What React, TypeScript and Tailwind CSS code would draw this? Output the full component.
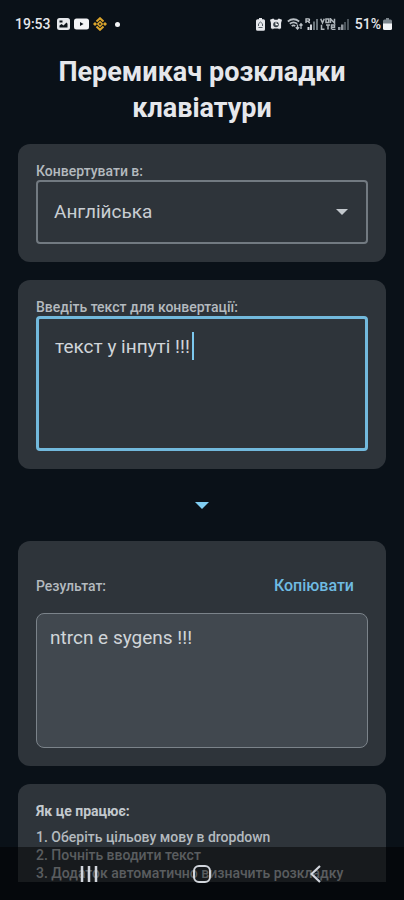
import { useMemo, useState } from "react";

const FONT = "font-['Roboto','Noto_Sans',sans-serif]";

const LANGUAGES = [
  { value: "en", label: "Англійська" },
  { value: "uk", label: "Українська" },
];

const UK_KEYS = "йцукенгшщзхїфівапролджєячсмитьбю";
const EN_KEYS = "qwertyuiop[]asdfghjkl;'zxcvbnm,.";

const STEPS = [
  "1. Оберіть цільову мову в dropdown",
  "2. Почніть вводити текст",
  "3. Додаток автоматично визначить розкладку",
];

function convertLayout(text: string, target: string): string {
  const from = target === "en" ? UK_KEYS : EN_KEYS;
  const to = target === "en" ? EN_KEYS : UK_KEYS;
  return Array.from(text)
    .map((char) => {
      const index = from.indexOf(char);
      return index === -1 ? char : to[index];
    })
    .join("");
}

function StatusBar() {
  return (
    <header className="flex h-12 shrink-0 items-center justify-between pr-3 pl-[15px] text-sm font-medium text-gray-200">
      <div className="flex items-center gap-1">
        <span className="mr-0.5">19:53</span>
        <svg className="h-3 w-[13px]" viewBox="0 0 13 12" aria-hidden>
          <rect width="13" height="12" rx="2.5" fill="#e5e7eb" />
          <path d="M2.5 9.5V7.5L4.5 6l2 1.5 3-3 1 1.2v3.8z" fill="#0b131a" />
          <path d="M2.5 2.5h3v2h-3z" fill="#0b131a" />
        </svg>
        <svg className="h-3 w-[15px]" viewBox="0 0 15 12" aria-hidden>
          <rect y="0.5" width="15" height="11" rx="2.5" fill="#f3f4f6" />
          <path d="M6 4 9.5 6 6 8z" fill="#0b131a" />
        </svg>
        <svg className="size-[14px]" viewBox="0 0 14 14" aria-hidden>
          <g fill="none" stroke="#dba52c" strokeWidth="2">
            <path d="M3.5 4.500 7 1.200l3.500 3.300M3.500 9.500 7 12.800l3.500-3.300" />
            <path d="M7 4.800 9.200 7 7 9.200 4.800 7z" strokeWidth="1.600" />
          </g>
          <path d="M0 7l2-2 2 2-2 2zM10 7l2-2 2 2-2 2z" fill="#dba52c" />
        </svg>
        <span className="ml-1 size-[5px] rounded-full bg-gray-100" />
      </div>

      <div className="flex items-center gap-0.5">
        <svg className="h-[13px] w-[9px]" viewBox="0 0 9 13" aria-hidden>
          <path
            d="M3 0h3v1.3h1.5Q9 1.3 9 2.8v8.4q0 1.5-1.5 1.5h-6Q0 12.7 0 11.2V2.8Q0 1.3 1.5 1.3H3z"
            fill="#e5e7eb"
          />
          <path d="M2.5 8V5.8L4.500 4l2 1.800V8M2.500 9.500h4" fill="none" stroke="#59636b" />
        </svg>
        <svg className="mx-[3px] h-3 w-3" viewBox="0 0 13 12" aria-hidden>
          <path
            d="M0 1.5 3.5 0 5 1.5h3L9.5 0 13 1.5 12 5v6h-1.500l-.5 1-1-1H4l-1 1-.5-1H1V5z"
            fill="#e5e7eb"
          />
          <circle cx="6.5" cy="6.5" r="3" fill="#39424a" />
          <path d="M6.5 4.2v2.500h2" fill="none" stroke="#fff" strokeWidth="1.2" />
        </svg>
        <svg className="h-3 w-4" viewBox="0 0 16 12" aria-hidden>
          <g fill="none" stroke="#b9bfc4" strokeWidth="1.7">
            <path d="M.8 3.500Q6.500-1 12.200 3.500" />
            <path d="M2.800 5.800Q6.500 3 10.200 5.800" />
            <path d="M4.700 8Q6.500 6.800 8.300 8" />
            <path
              d="M10.500 11V6.500M8.800 9.300l1.700 1.800 1.700-1.800M14 11V6M12.500 7.500 14 5.800l1.500 1.700"
              strokeWidth="1.3"
            />
          </g>
        </svg>
        <svg className="h-3 w-[13px]" viewBox="0 0 13 12" aria-hidden>
          <path
            d="M1 5V.8h2.200q1.300 0 1.300 1.200T3.200 3.200H1M3 3.200 4.800 5"
            fill="none"
            stroke="#c8cdd1"
            strokeWidth="1.3"
          />
          <path d="M2.500 12V9h2v3M5 12V6.500h2V12" fill="#d1d5db" />
          <path d="M8 12V3.500h2V12M11 12V1h2v11" fill="#69737a" />
        </svg>
        <svg className="h-3 w-4" viewBox="0 0 16 12" aria-hidden>
          <g fill="none" stroke="#adb4b9" strokeWidth="1.5">
            <path d="M.7.8 2.500 4.800 4.300.8M6 1h2.700v3.500H6zM10.500 5V.8L14.500 5V.8" />
            <path d="M1.500 6.800v4.500h3M8 6.500v5M6 7h4M11.500 11.500V7h3v2.200h-3M12 11.400h3.500" />
          </g>
        </svg>
        <svg className="h-3 w-[11px]" viewBox="0 0 11 12" aria-hidden>
          <path d="M0 12V9h2.500v3M3 12V6.500h2.500V12" fill="#9299a0" />
          <path d="M6 12V4h2v8M9 12V1h2v11" fill="#4a535a" />
        </svg>
        <span className="ml-1">51%</span>
        <svg className="h-3 w-[9px]" viewBox="0 0 9 12" aria-hidden>
          <path d="M3 0h3v1.5h1.5Q9 1.5 9 3v3H0V3q0-1.500 1.500-1.500H3z" fill="#7c858c" />
          <path d="M0 5.500h9v5Q9 12 7.500 12h-6Q0 12 0 10.500z" fill="#f3f4f6" />
        </svg>
      </div>
    </header>
  );
}

function SystemNav() {
  return (
    <nav className="fixed inset-x-0 bottom-0 grid h-[53px] grid-cols-3 items-center justify-items-center bg-black/50 px-8 text-gray-300">
      <button type="button" aria-label="Останні програми">
        <svg className="h-[18px] w-5" viewBox="0 0 20 18" aria-hidden>
          <path
            d="M3 1v16M10 1v16M17 1v16"
            stroke="currentColor"
            strokeWidth="2.5"
          />
        </svg>
      </button>
      <button type="button" aria-label="Головний екран">
        <svg className="size-[18px]" viewBox="0 0 18 18" aria-hidden>
          <rect
            x="1"
            y="1"
            width="16"
            height="16"
            rx="5"
            fill="none"
            stroke="currentColor"
            strokeWidth="2"
          />
        </svg>
      </button>
      <button type="button" aria-label="Назад">
        <svg className="h-[18px] w-[11px]" viewBox="0 0 11 18" aria-hidden>
          <path
            d="M10 1 1.500 9l8.500 8"
            fill="none"
            stroke="currentColor"
            strokeWidth="2.2"
          />
        </svg>
      </button>
    </nav>
  );
}

export default function App() {
  const [target, setTarget] = useState("en");
  const [text, setText] = useState("текст у інпуті !!!");
  const [pristine, setPristine] = useState(true);

  const result = useMemo(() => convertLayout(text, target), [text, target]);

  return (
    <div className={`${FONT} flex h-screen flex-col bg-[#0a1118] pb-[18px]`}>
      <StatusBar />

      <main className="flex min-h-0 flex-1 flex-col overflow-y-auto px-[18px] pt-1.5 [scrollbar-width:none]">
        <h1 className="shrink-0 px-4 text-center text-[27px] leading-9 font-bold text-gray-200">
          Перемикач розкладки клавіатури
        </h1>

        <section className="mt-[18px] flex shrink-0 flex-col rounded-xl bg-[#2e343a] p-[18px]">
          <label
            htmlFor="target"
            className="text-sm leading-[18px] font-medium text-[#b4babf]"
          >
            Конвертувати в:
          </label>
          <div className="relative">
            <select
              id="target"
              value={target}
              onChange={(e) => setTarget(e.target.value)}
              className="h-16 w-full appearance-none rounded-[4px] border-2 border-[#727a81] bg-transparent px-4 text-[19px] text-[#c9ced3] outline-none"
            >
              {LANGUAGES.map((language) => (
                <option key={language.value} value={language.value}>
                  {language.label}
                </option>
              ))}
            </select>
            <svg
              className="pointer-events-none absolute top-1/2 right-5 h-1.5 w-3 -translate-y-1/2"
              viewBox="0 0 12 6"
              aria-hidden
            >
              <path d="M0 0h12L6 6z" fill="#c3c8cd" />
            </svg>
          </div>
        </section>

        <section className="mt-[18px] flex shrink-0 flex-col rounded-xl bg-[#2e343a] p-[18px]">
          <label
            htmlFor="source"
            className="text-sm leading-[18px] font-medium text-[#b4babf]"
          >
            Введіть текст для конвертації:
          </label>
          <div className="relative flex">
            <textarea
              id="source"
              value={text}
              onChange={(e) => {
                setText(e.target.value);
                setPristine(false);
              }}
              className="h-[135px] w-full resize-none rounded-[4px] border-3 border-[#72b9dc] bg-transparent px-4 py-3.5 text-[19px] leading-7 text-[#d0d5d9] outline-none"
            />
            {pristine ? (
              <span className="pointer-events-none absolute top-4 left-[156px] h-7 w-0.5 bg-[#7cc8ee]" />
            ) : null}
          </div>
        </section>

        <div className="flex h-[72px] shrink-0 items-center justify-center">
          <svg className="h-[7px] w-3.5" viewBox="0 0 14 7" aria-hidden>
            <path d="M0 0h14L7 7z" fill="#7fcdf2" />
          </svg>
        </div>

        <section className="flex shrink-0 flex-col rounded-xl bg-[#2e343a] p-[18px]">
          <div className="flex h-[54px] items-center justify-between">
            <label htmlFor="result" className="text-sm font-medium text-[#b4babf]">
              Результат:
            </label>
            <button
              type="button"
              className="h-11 px-3.5 text-base font-medium text-[#6fbbe2]"
            >
              Копіювати
            </button>
          </div>
          <textarea
            id="result"
            readOnly
            value={result}
            className="h-[135px] resize-none rounded-lg border border-[#7b838a] bg-[#41484f] px-[13px] py-2.5 text-[19px] leading-7 text-[#d0d5d9] outline-none"
          />
        </section>

        <section className="mt-[18px] shrink-0 rounded-xl bg-[#2e343a] p-[18px]">
          <h2 className="text-sm leading-[18px] font-bold text-[#c3c9ce]">
            Як це працює:
          </h2>
          <ol className="mt-2 text-sm leading-[18px] font-medium text-[#b4babf]">
            {STEPS.map((step) => (
              <li key={step}>{step}</li>
            ))}
          </ol>
        </section>
      </main>

      <SystemNav />
    </div>
  );
}
